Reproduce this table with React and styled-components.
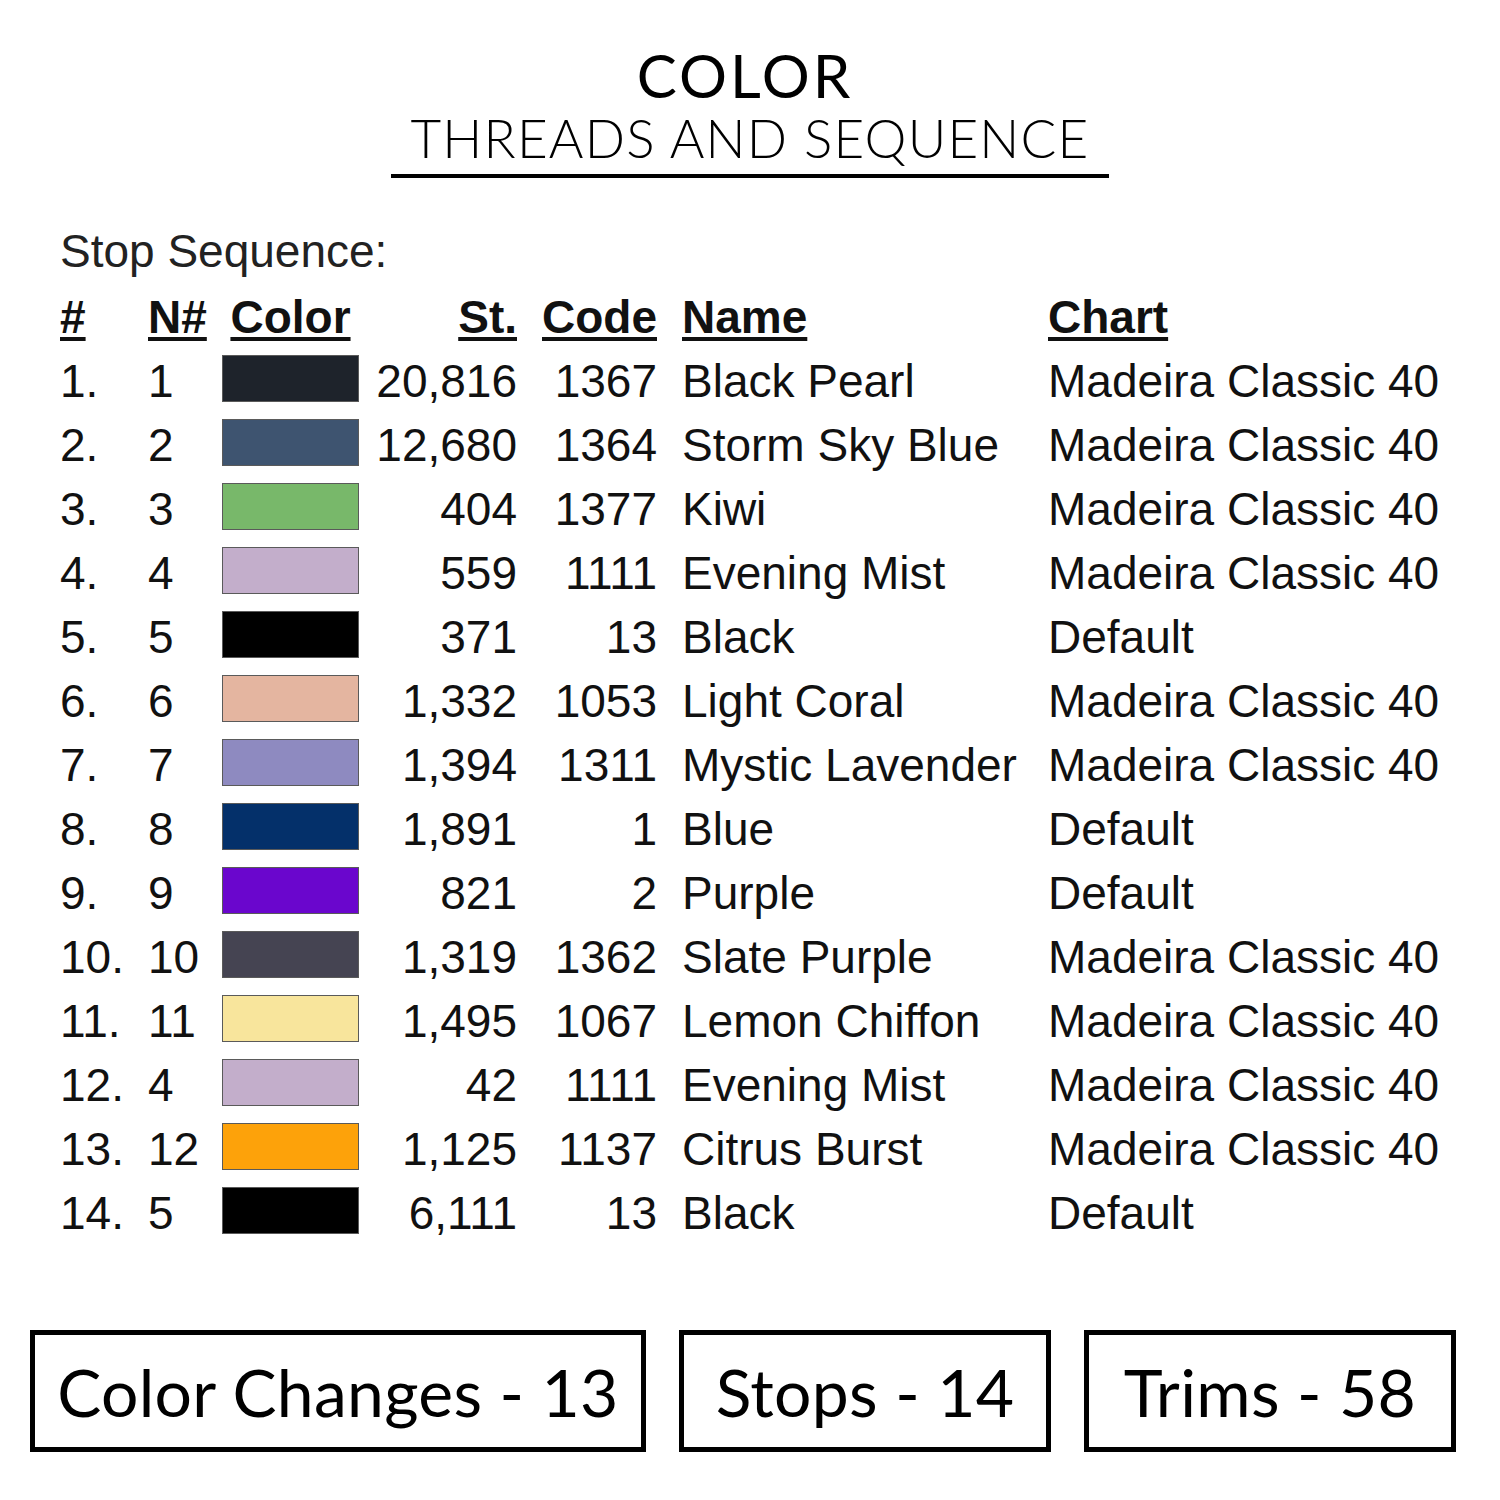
import React from "react"
import styled, { createGlobalStyle } from "styled-components"

const Global = createGlobalStyle`
  html, body { margin: 0; padding: 0; background: #fff; }
`

const Page = styled.div`
  width: 1500px;
  height: 1500px;
  background: #fff;
  display: flex;
  flex-direction: column;
  color: #111;
`

const TitleBlock = styled.div`
  display: flex;
  flex-direction: column;
  align-items: center;
  padding-top: 45px;
`

const Title = styled.div`
  font-family: Lato, "Open Sans", sans-serif;
  font-size: 60px;
  line-height: 60px;
  letter-spacing: 3px;
  color: #000;
  margin-left: -10px;
`

const Subtitle = styled.div`
  font-family: Lato, "Open Sans", sans-serif;
  font-weight: 300;
  font-size: 53px;
  line-height: 53px;
  letter-spacing: 1.2px;
  color: #000;
  margin-top: 6px;
  padding: 0 19px 10px;
  border-bottom: 4px solid #000;
`

const Caption = styled.div`
  font-family: "Liberation Sans", Arial, sans-serif;
  font-size: 46px;
  line-height: 64px;
  color: #222;
  margin: 41px 0 2px 60px;
`

const Table = styled.div`
  display: grid;
  grid-template-columns: 88px 74px 137px 158px 140px 391px 1fr;
  grid-auto-rows: 64px;
  padding-left: 60px;
  font-family: "Liberation Sans", Arial, sans-serif;
  font-size: 46px;
  line-height: 64px;
  color: #111;
`

const Head = styled.div`
  font-weight: 700;
  text-align: ${(p) => p.$align || "left"};
  padding-left: ${(p) => p.$pad || 0}px;
  span {
    text-decoration: underline;
    text-decoration-thickness: 4px;
    text-underline-offset: 4px;
  }
`

const Cell = styled.div`
  white-space: nowrap;
  text-align: ${(p) => p.$align || "left"};
  padding-left: ${(p) => p.$pad || 0}px;
`

const Swatch = styled.div`
  height: 47px;
  margin-top: 6px;
  box-sizing: border-box;
  border: 1px solid #5a5a5a;
  background: ${(p) => p.$color};
`

const Boxes = styled.div`
  display: flex;
  gap: 33px;
  padding-left: 30px;
  margin-top: 85px;
`

const StatBox = styled.div`
  width: ${(p) => p.$w}px;
  height: 122px;
  box-sizing: border-box;
  border: 5px solid #000;
  display: flex;
  align-items: center;
  justify-content: center;
  font-family: Lato, "Open Sans", sans-serif;
  font-size: 66px;
  letter-spacing: 0.3px;
  color: #000;
`

const rows = [
  ["1.", "1", "#1e232b", "20,816", "1367", "Black Pearl", "Madeira Classic 40"],
  ["2.", "2", "#3e5470", "12,680", "1364", "Storm Sky Blue", "Madeira Classic 40"],
  ["3.", "3", "#78b86a", "404", "1377", "Kiwi", "Madeira Classic 40"],
  ["4.", "4", "#c3aecb", "559", "1111", "Evening Mist", "Madeira Classic 40"],
  ["5.", "5", "#000000", "371", "13", "Black", "Default"],
  ["6.", "6", "#e4b5a0", "1,332", "1053", "Light Coral", "Madeira Classic 40"],
  ["7.", "7", "#8e8ac0", "1,394", "1311", "Mystic Lavender", "Madeira Classic 40"],
  ["8.", "8", "#04306a", "1,891", "1", "Blue", "Default"],
  ["9.", "9", "#6a06cd", "821", "2", "Purple", "Default"],
  ["10.", "10", "#454452", "1,319", "1362", "Slate Purple", "Madeira Classic 40"],
  ["11.", "11", "#f8e59c", "1,495", "1067", "Lemon Chiffon", "Madeira Classic 40"],
  ["12.", "4", "#c3aecb", "42", "1111", "Evening Mist", "Madeira Classic 40"],
  ["13.", "12", "#fda20a", "1,125", "1137", "Citrus Burst", "Madeira Classic 40"],
  ["14.", "5", "#000000", "6,111", "13", "Black", "Default"],
]

export default function App() {
  return (
    <Page>
      <Global />
      <TitleBlock>
        <Title>COLOR</Title>
        <Subtitle>THREADS AND SEQUENCE</Subtitle>
      </TitleBlock>

      <Caption>Stop Sequence:</Caption>

      <Table>
        <Head><span>#</span></Head>
        <Head><span>N#</span></Head>
        <Head $align="center"><span>Color</span></Head>
        <Head $align="right"><span>St.</span></Head>
        <Head $align="right"><span>Code</span></Head>
        <Head $pad={25}><span>Name</span></Head>
        <Head><span>Chart</span></Head>
        {rows.map((r, i) => (
          <React.Fragment key={i}>
            <Cell>{r[0]}</Cell>
            <Cell>{r[1]}</Cell>
            <Swatch $color={r[2]} />
            <Cell $align="right">{r[3]}</Cell>
            <Cell $align="right">{r[4]}</Cell>
            <Cell $pad={25}>{r[5]}</Cell>
            <Cell>{r[6]}</Cell>
          </React.Fragment>
        ))}
      </Table>

      <Boxes>
        <StatBox $w={616}>Color Changes - 13</StatBox>
        <StatBox $w={372}>Stops - 14</StatBox>
        <StatBox $w={372}>Trims - 58</StatBox>
      </Boxes>
    </Page>
  )
}
